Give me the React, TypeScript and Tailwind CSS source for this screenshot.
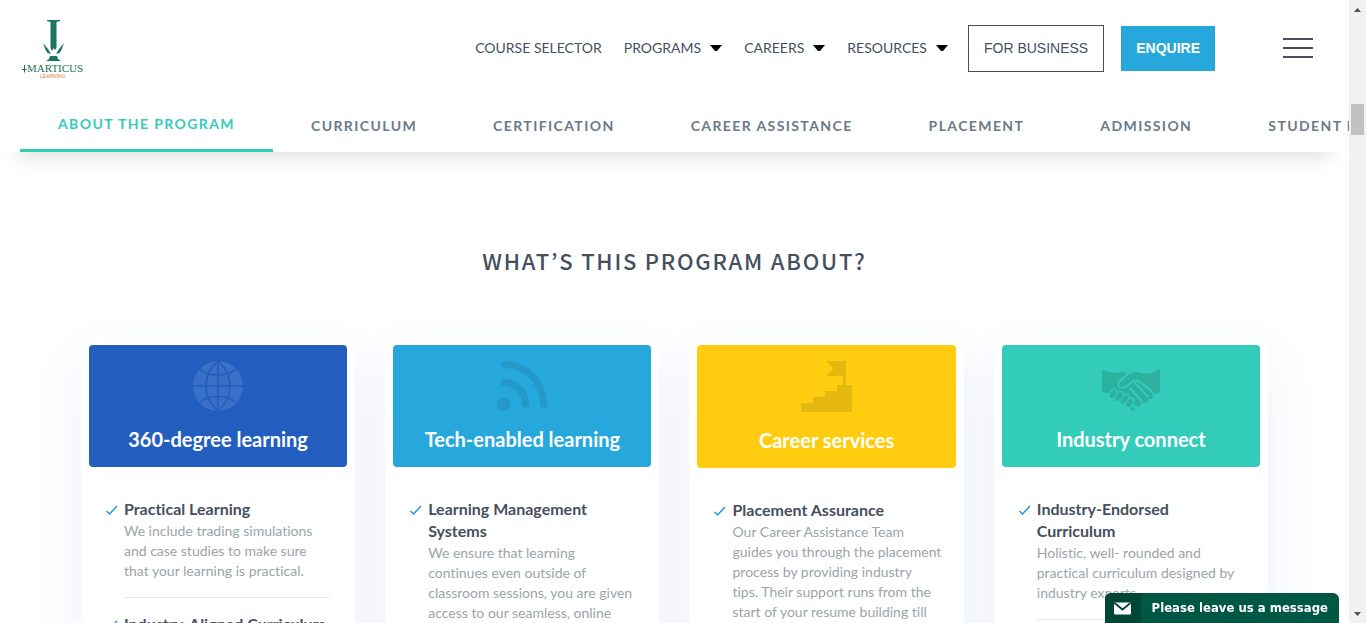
import React from "react";

type Item = { title: string; body: string };
type Card = { title: string; header: string; icon: React.ReactNode; items: Item[] };

const GlobeIcon = () => (
  <svg viewBox="0 0 50 50" className="h-[50px] w-[50px]" aria-hidden="true">
    <circle cx="25" cy="25" r="25" fill="#3a70c8" />
    <g fill="none" stroke="#235ebf" strokeWidth="1.6">
      <path d="M25 0V50M0 25H50" />
      <path d="M25 0C9 14 9 36 25 50M25 0C41 14 41 36 25 50" />
      <path d="M6 8C17 16 33 16 44 8M6 42C17 33 33 33 44 42" />
    </g>
  </svg>
);

const FeedIcon = () => (
  <svg viewBox="0 0 50 50" className="h-[50px] w-[50px]" aria-hidden="true">
    <circle cx="6.7" cy="43.2" r="6.8" fill="#2299c9" />
    <g fill="none" stroke="#2299c9" strokeWidth="7" strokeLinecap="round">
      <path d="M7.5 3.6C29 3.6 46.5 21 46.5 43" />
      <path d="M7.5 21.6C19 21.6 28.5 31 28.5 43" />
    </g>
  </svg>
);

const StairsIcon = () => (
  <svg viewBox="0 0 51 51" className="h-[51px] w-[51px]" aria-hidden="true">
    <path
      fill="#e5b80f"
      d="M25 0H45V24H51V51H0V42H12V36H24V30H36V24H42V15H25L32.500 7.500Z"
    />
  </svg>
);

const HandshakeIcon = () => (
  <svg viewBox="0 0 58 50" className="h-[50px] w-[58px]" aria-hidden="true">
    <path
      fill="#2cb1a0"
      d="M0 8C7 12 13 12.500 19 11.500C22 11 24 11.800 25.500 12.500L28 13C31 11 34 11 38 12C45 14 52 12 58 8V31L51 33.500C52 37 49 39 46 37.500C47 41 43 43 40 41C40 45 36 47 32.500 44L25 37L21 35L18 32L13 31L9 32L5 32L0 31Z"
    />
    <path
      fill="none"
      stroke="#33ccbb"
      strokeWidth="2"
      strokeLinecap="round"
      d="M26 12.500L17 21C15 24 17 27 20 27C24 27 28 22.500 31 20C33 18.500 34 19 36 20C42 24 47 27 51 32M33 22L46 36M28 27L39.500 40"
    />
    <g stroke="#33ccbb" strokeWidth="7.600" strokeLinecap="round">
      <path d="M10 34.500L12 31.500M15.500 37.500L18.500 33.500M21 40.500L24 36.500M27 43L29 40" />
    </g>
    <g stroke="#2cb1a0" strokeWidth="5" strokeLinecap="round">
      <path d="M10 34.500L12 31.500M15.500 37.500L18.500 33.500M21 40.500L24 36.500M26.500 43.500L28.500 40.500" />
    </g>
    <circle cx="30.500" cy="48" r="2" fill="#2cb1a0" />
  </svg>
);

const CheckIcon = () => (
  <svg viewBox="0 0 13 22" className="h-[22px] w-[13px] shrink-0" aria-hidden="true">
    <path d="M1.500 13L4.500 16L12 8" fill="none" stroke="#1e90e8" strokeWidth="1.400" />
  </svg>
);

const Caret = () => (
  <svg viewBox="0 0 12 6" className="h-1.5 w-3" aria-hidden="true">
    <path d="M0 0H12L7 6H5Z" fill="#000" />
  </svg>
);

const Logo = () => (
  <svg viewBox="-1 -2 64 60" className="h-[60px] w-16 overflow-visible" role="img" aria-label="Imarticus Learning">
    <g fill="#1d7560">
      <path d="M25 0H38V1L34.500 2V28L33 30L31.500 28L30 31L28.500 28V2L25 1Z" />
      <path d="M21 23L26 29L29 34L25.500 33L23.500 30ZM42 23L37 29L34 34L37.500 33L39.500 30Z" />
      <path d="M28 36H35L36 39L39 41H24L27 39Z" />
      <path d="M2 45H3V49H4.500V50H3V53L2 52V50H0V49H2Z" />
    </g>
    <text x="5" y="52" fontFamily="Liberation Serif, serif" fontSize="11" fill="#1d7560">
      MARTICUS
    </text>
    <text x="18" y="58" fontFamily="Liberation Sans, sans-serif" fontSize="5" fill="#e07f42">
      LEARNING
    </text>
  </svg>
);

const cards: Card[] = [
  {
    title: "360-degree learning",
    header: "bg-[#235ebf]",
    icon: <GlobeIcon />,
    items: [
      {
        title: "Practical Learning",
        body: "We include trading simulations and case studies to make sure that your learning is practical.",
      },
      { title: "Industry-Aligned Curriculum", body: "" },
    ],
  },
  {
    title: "Tech-enabled learning",
    header: "bg-[#26a8dd]",
    icon: <FeedIcon />,
    items: [
      {
        title: "Learning Management Systems",
        body: "We ensure that learning continues even outside of classroom sessions, you are given access to our seamless, online",
      },
    ],
  },
  {
    title: "Career services",
    header: "bg-[#ffcc0f]",
    icon: <StairsIcon />,
    items: [
      {
        title: "Placement Assurance",
        body: "Our Career Assistance Team guides you through the placement process by providing industry tips.\u00a0Their support runs from the start of your resume building till",
      },
    ],
  },
  {
    title: "Industry connect",
    header: "bg-[#33ccbb]",
    icon: <HandshakeIcon />,
    items: [
      {
        title: "Industry-Endorsed Curriculum",
        body: "Holistic, well- rounded and practical curriculum designed by industry experts.",
      },
    ],
  },
];

const menus = ["PROGRAMS", "CAREERS", "RESOURCES"];
const tabs = ["CURRICULUM", "CERTIFICATION", "CAREER ASSISTANCE", "PLACEMENT", "ADMISSION", "STUDENT PROFILE"];

function Header() {
  return (
    <header className="relative z-20 bg-white shadow-[0_24px_20px_-20px_rgba(0,0,0,0.14)]">
      <div className="flex items-center justify-between pt-[18px] pr-9 pb-[22px] pl-[21px]">
        <a href="#home">
          <Logo />
        </a>
        <div className="flex items-center">
          <nav className="flex items-center gap-[22px] text-sm text-[#454f5e]">
            <a href="#courses">COURSE SELECTOR</a>
            {menus.map((m) => (
              <button key={m} type="button" className="flex items-center gap-[9px]">
                {m}
                <Caret />
              </button>
            ))}
          </nav>
          <button
            type="button"
            className="ml-5 h-[47px] border border-[#454f5e] px-[15px] font-['Liberation_Sans',sans-serif] text-sm text-[#454f5e]"
          >
            FOR BUSINESS
          </button>
          <button
            type="button"
            className="ml-[17px] h-[45px] bg-[#26a8dd] px-[15px] font-['Liberation_Sans',sans-serif] text-sm font-bold text-white"
          >
            ENQUIRE
          </button>
          <button type="button" aria-label="Open menu" className="ml-[68px] flex w-[30px] flex-col gap-[7px]">
            <span className="h-0.5 bg-[#454f5e]" />
            <span className="h-0.5 bg-[#454f5e]" />
            <span className="h-0.5 bg-[#454f5e]" />
          </button>
        </div>
      </div>
      <nav className="flex h-[52px] overflow-hidden pl-5 text-sm font-bold tracking-widest whitespace-nowrap text-[#6b7a8a]">
        <a href="#about" className="flex items-center border-b-3 border-[#33ccbb] px-[38px] pb-0.5 text-[#33ccbb]">
          ABOUT THE PROGRAM
        </a>
        {tabs.map((t) => (
          <a key={t} href="#tab" className="flex items-center px-[38px]">
            {t}
          </a>
        ))}
      </nav>
    </header>
  );
}

function ProgramCard({ card }: { card: Card }) {
  return (
    <article className="shadow-[0_24px_50px_0_rgba(60,100,190,0.09)]">
      <div className="relative z-10 h-full bg-white p-2">
        <div className={`flex flex-col items-center gap-4 rounded p-4 text-white ${card.header}`}>
          {card.icon}
          <h3 className="text-xl leading-6 font-bold">{card.title}</h3>
        </div>
        <ul className="px-4 pt-[31px]">
          {card.items.map((item) => (
            <li key={item.title} className="flex gap-1.5 pb-[15px]">
              <CheckIcon />
              <div className="min-w-0 grow border-b border-[#e6e8ea] pb-4">
                <h4 className="mb-px text-base leading-[22px] font-bold text-[#454f5e]">{item.title}</h4>
                <p className="-mr-0.5 text-sm leading-5 text-[#9ba4ab]">{item.body}</p>
              </div>
            </li>
          ))}
        </ul>
      </div>
    </article>
  );
}

function Scrollbar() {
  return (
    <div className="flex w-[17px] shrink-0 flex-col items-center bg-[#f1f1f1] pt-2 pb-[7px]" aria-hidden="true">
      <svg viewBox="0 0 7 4" className="h-1 w-[7px]">
        <path d="M0 4L3.500 0L7 4Z" fill="#505050" />
      </svg>
      <div className="mt-[92px] h-[31px] w-[13px] bg-[#c1c1c1]" />
      <svg viewBox="0 0 7 4" className="mt-auto h-1 w-[7px]">
        <path d="M0 0L3.500 4L7 0Z" fill="#505050" />
      </svg>
    </div>
  );
}

export default function App() {
  return (
    <div className="flex h-screen overflow-hidden bg-white font-[Lato,sans-serif] [font-variant-ligatures:none]">
      <div className="min-w-0 grow overflow-hidden">
        <Header />
        <main className="pt-[92px]">
          <h2 className="text-center font-['Noto_Sans_CJK_KR',sans-serif] text-[22px] leading-8 font-medium tracking-[0.08em] text-[#454f5e]">
            WHAT’S THIS PROGRAM ABOUT?
          </h2>
          <section className="mx-auto mt-[61px] grid w-[88%] grid-cols-4 gap-[30px]">
            {cards.map((card) => (
              <ProgramCard key={card.title} card={card} />
            ))}
          </section>
        </main>
      </div>
      <Scrollbar />
      <button
        type="button"
        className="fixed right-[27px] bottom-0 z-30 flex h-[30px] items-stretch overflow-hidden rounded-t-md bg-[#005844] text-white"
      >
        <span className="flex w-9 items-center justify-center bg-[#004635]">
          <svg viewBox="0 0 17 13" className="h-[13px] w-[17px]" aria-hidden="true">
            <rect y="0.500" width="17" height="12" rx="1" fill="#fff" />
            <path d="M0.500 1L8.500 7.500L16.500 1" fill="none" stroke="#004635" strokeWidth="1.800" />
          </svg>
        </span>
        <span className="flex items-center px-[11px] font-['DejaVu_Sans_Condensed','DejaVu_Sans',sans-serif] text-[13px] font-bold">
          Please leave us a message
        </span>
      </button>
    </div>
  );
}
